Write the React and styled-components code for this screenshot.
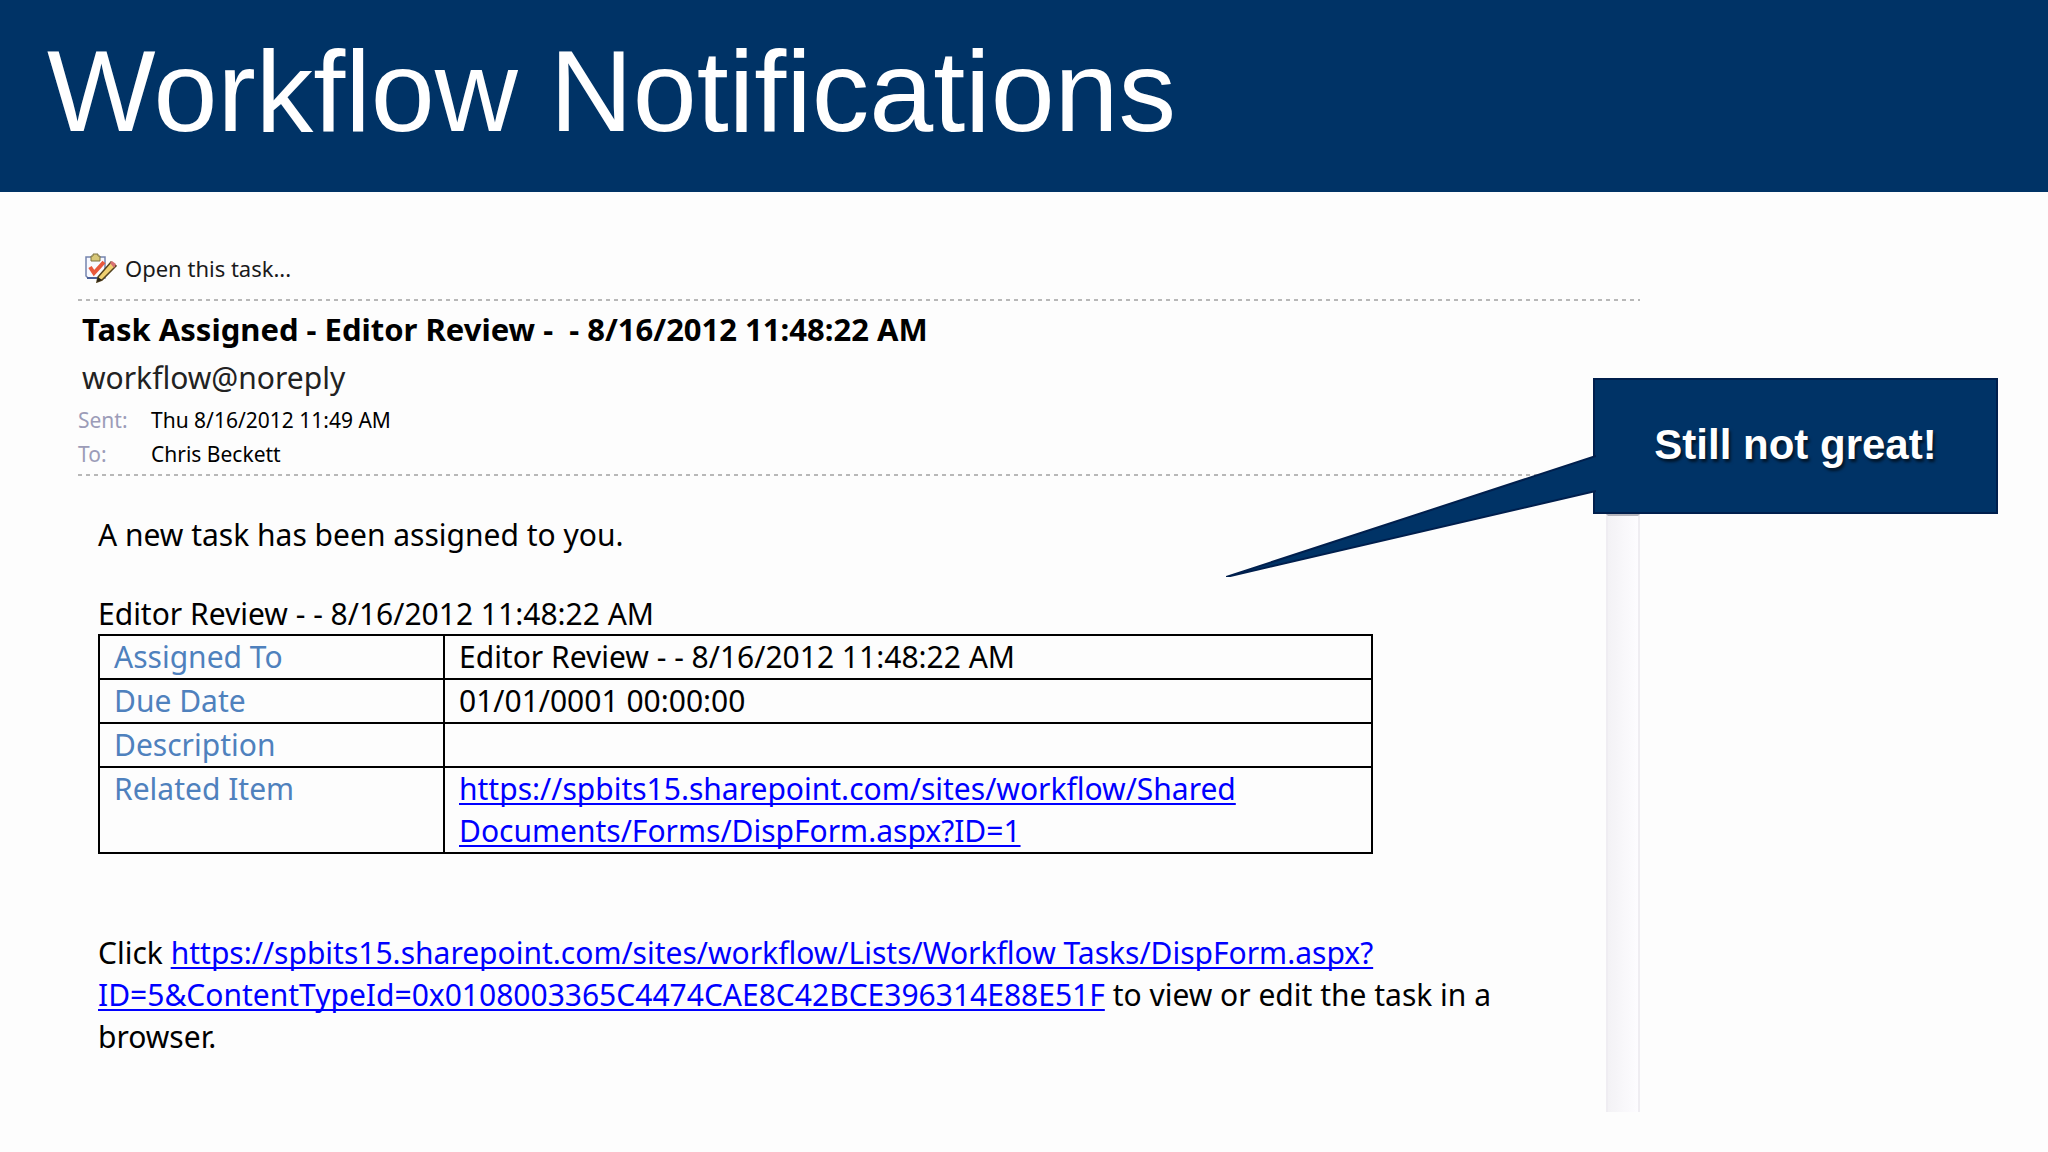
import styled, { createGlobalStyle } from 'styled-components';

const colors = {
  navy: '#003366',
  navyEdge: '#001f4d',
  link: '#0000ff',
  label: '#4f81bd',
  muted: '#9c9cb8',
  rule: '#b8b8b8',
};

const GlobalStyle = createGlobalStyle`
  *, *::before, *::after {
    box-sizing: border-box;
  }

  body {
    margin: 0;
    background-color: #fdfdfd;
    color: #000;
    font-family: 'Noto Sans', 'Open Sans', sans-serif;
  }
`;

const Banner = styled.header`
  width: 100%;
  padding: 25px 47px 35px;
  background-color: ${colors.navy};
`;

const BannerTitle = styled.h1`
  margin: 0;
  color: #fff;
  font-family: 'Liberation Sans', Arial, sans-serif;
  font-size: 115px;
  font-weight: 400;
  line-height: 132px;
`;

const Content = styled.main`
  position: relative;
  padding: 60px calc(20% - 2px) 40px 78px;
`;

const OpenTask = styled.button`
  display: flex;
  align-items: center;
  gap: 8px;
  padding: 0 6px;
  border: 0;
  background: none;
  color: #1a1a1a;
  font-family: inherit;
  font-size: 22px;
  line-height: 32px;
  cursor: pointer;
`;

// short dashes along the top and bottom edges
const MailHeader = styled.section`
  margin-top: 15px;
  padding: 6px 0 5px;
  background-image:
    repeating-linear-gradient(to right, ${colors.rule} 0 4px, transparent 4px 8px),
    repeating-linear-gradient(to right, ${colors.rule} 0 4px, transparent 4px 8px);
  background-position: top, bottom;
  background-repeat: no-repeat;
  background-size: 100% 2px;
`;

const Subject = styled.h2`
  margin: 0;
  padding: 0 4px;
  font-size: 31px;
  font-weight: 700;
  line-height: 48px;
  white-space: pre-wrap;
`;

const Sender = styled.p`
  margin: 0;
  padding: 0 4px;
  color: #222;
  font-size: 30px;
  line-height: 50px;
`;

const Details = styled.dl`
  display: grid;
  grid-template-columns: 73px 1fr;
  margin: 0;
  font-size: 21px;
  line-height: 34px;
`;

const DetailLabel = styled.dt`
  color: ${colors.muted};
`;

const DetailValue = styled.dd`
  margin: 0;
`;

const MailBody = styled.div`
  display: flex;
`;

const Message = styled.article`
  flex: 1;
  padding: 38px 26px 54px 20px;
  font-size: 30px;
  line-height: 42px;
`;

const Paragraph = styled.p`
  margin: 0;
`;

const TaskTable = styled.table`
  width: 86%;
  margin-bottom: 78px;
  border-collapse: collapse;

  caption {
    padding-top: 38px;
    line-height: 40px;
    text-align: left;
  }

  th,
  td {
    height: 44px;
    padding: 0 14px;
    border: 2px solid #000;
    font-weight: 400;
    text-align: left;
    vertical-align: top;
  }

  th {
    width: 345px;
    color: ${colors.label};
  }
`;

const MailLink = styled.a`
  color: ${colors.link};
  text-decoration: underline;
  text-decoration-thickness: 2px;
  text-underline-offset: 3px;
  text-decoration-skip-ink: none;
`;

const ScrollTrack = styled.div`
  flex: none;
  width: 34px;
  margin-top: 38px;
  border: 2px solid #efedf2;
  border-top-color: #b4b4bc;
  border-bottom: 0;
  background: linear-gradient(to right, #f3f2f5, #fdfcff);
`;

const Callout = styled.aside`
  position: absolute;
  top: 186px;
  right: 50px;
  display: flex;
  align-items: center;
  justify-content: center;
  width: 405px;
  height: 136px;
  padding-bottom: 2px;
  border: 2px solid ${colors.navyEdge};
  background-color: ${colors.navy};
  color: #fff;
  font-family: 'Liberation Sans', Arial, sans-serif;
  font-size: 42px;
  font-weight: 700;
  text-shadow: 2px 3px 3px rgba(0, 0, 0, 0.6);
`;

const CalloutTail = styled.svg`
  position: absolute;
  top: 73px;
  right: 400px;
  width: 370px;
  height: 124px;
`;

const taskFields = [
  { label: 'Assigned To', value: 'Editor Review - - 8/16/2012 11:48:22 AM' },
  { label: 'Due Date', value: '01/01/0001 00:00:00' },
  { label: 'Description', value: null },
  {
    label: 'Related Item',
    value: 'https://spbits15.sharepoint.com/sites/workflow/Shared Documents/Forms/DispForm.aspx?ID=1',
    isLink: true,
  },
];

const TaskIcon = () => (
  <svg width="33" height="30" viewBox="0 0 33 30" aria-hidden="true">
    <path d="M2 4h19v21H4l-2-2z" fill="#f8f9ff" stroke="#7484ae" strokeWidth="1.5" />
    <path d="M3 25h16" stroke="#4a5f98" strokeWidth="2" />
    <path d="M7 3h2V1h5v2h2v5H7z" fill="#d8c878" stroke="#7b7140" />
    <path d="M6 14l4 6 10-11" fill="none" stroke="#e8583c" strokeWidth="4" />
    <path d="M14 24L27 9l5 4-14 14-5 2z" fill="#f0d070" stroke="#54431f" strokeWidth="1.5" />
    <path d="M26 10l2-2 4 3-2 4z" fill="#d77272" />
    <path d="M14 24l4 3-5 2z" fill="#2a2418" />
  </svg>
);

const App = () => {
  return (
    <>
      <GlobalStyle />
      <Banner>
        <BannerTitle>Workflow Notifications</BannerTitle>
      </Banner>
      <Content>
        <OpenTask type="button">
          <TaskIcon />
          Open this task...
        </OpenTask>

        <MailHeader>
          <Subject>{'Task Assigned - Editor Review -  - 8/16/2012 11:48:22 AM'}</Subject>
          <Sender>workflow@noreply</Sender>
          <Details>
            <DetailLabel>Sent:</DetailLabel>
            <DetailValue>Thu 8/16/2012 11:49 AM</DetailValue>
            <DetailLabel>To:</DetailLabel>
            <DetailValue>Chris Beckett</DetailValue>
          </Details>
        </MailHeader>

        <MailBody>
          <Message>
            <Paragraph>A new task has been assigned to you.</Paragraph>
            <TaskTable>
              <caption>Editor Review - - 8/16/2012 11:48:22 AM</caption>
              <tbody>
                {taskFields.map((field) => (
                  <tr key={field.label}>
                    <th scope="row">{field.label}</th>
                    <td>
                      {field.isLink ? <MailLink href={field.value}>{field.value}</MailLink> : field.value}
                    </td>
                  </tr>
                ))}
              </tbody>
            </TaskTable>
            <Paragraph>
              Click{' '}
              <MailLink href="https://spbits15.sharepoint.com/sites/workflow/Lists/Workflow Tasks/DispForm.aspx?ID=5&ContentTypeId=0x0108003365C4474CAE8C42BCE396314E88E51F">
                https://spbits15.sharepoint.com/sites/workflow/Lists/Workflow Tasks/DispForm.aspx?
                <wbr />
                ID=5&amp;ContentTypeId=0x0108003365C4474CAE8C42BCE396314E88E51F
              </MailLink>{' '}
              to view or edit the task in a browser.
            </Paragraph>
          </Message>
          <ScrollTrack />
        </MailBody>

        <Callout>
          <CalloutTail viewBox="0 0 370 124" aria-hidden="true">
            <path d="M370 3L0 124L370 38" fill={colors.navy} stroke={colors.navyEdge} strokeWidth="2" />
          </CalloutTail>
          Still not great!
        </Callout>
      </Content>
    </>
  );
};

export default App;
